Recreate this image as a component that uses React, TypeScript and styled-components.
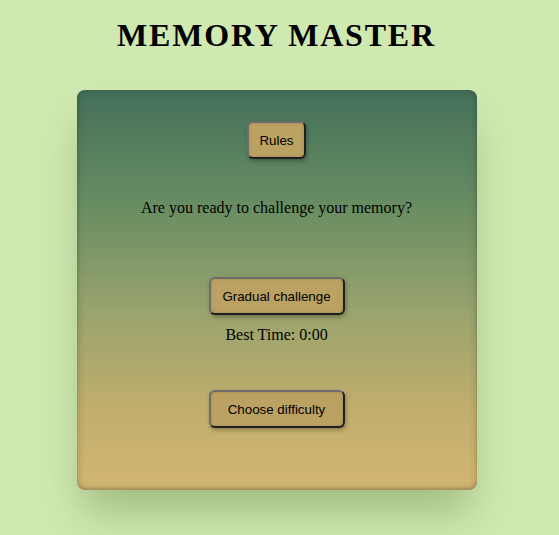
import React from "react";
import styled, { createGlobalStyle } from "styled-components";

const Global = createGlobalStyle`
  html, body {
    margin: 0;
    padding: 0;
    background: #d0e9b0;
    font-family: "Liberation Serif", "Times New Roman", serif;
    color: #000;
  }
`;

const Page = styled.div`
  box-sizing: border-box;
  min-height: 100vh;
  display: flex;
  flex-direction: column;
  align-items: center;
  padding: 17px 6px 60px 0;
`;

const Title = styled.h1`
  margin: 0;
  font-family: "Liberation Serif", "Times New Roman", serif;
  font-size: 32px;
  font-weight: bold;
  letter-spacing: 1.8px;
  line-height: 37px;
`;

const Card = styled.div`
  box-sizing: border-box;
  flex-shrink: 0;
  margin-top: 36px;
  width: 400px;
  height: 400px;
  border-radius: 8px;
  padding-top: 31px;
  display: flex;
  flex-direction: column;
  align-items: center;
  background: linear-gradient(to bottom, #44705a 0%, #6a8e62 30%, #98a36d 55%, #c1ae6c 80%, #d3b672 100%);
  box-shadow: inset 0 0 8px rgba(0, 0, 0, 0.2), inset 0 -2px 3px rgba(0, 0, 0, 0.15),
    0 28px 40px -6px rgba(50, 90, 30, 0.3);
`;

const Button = styled.button<{ $wide?: boolean }>`
  box-sizing: border-box;
  font-family: "Liberation Sans", Arial, sans-serif;
  font-size: 13.33px;
  color: #000;
  background: #bba262;
  border: 2px solid;
  border-color: #6e6e6e #1f1f1f #1f1f1f #6e6e6e;
  border-radius: 6px;
  height: 38px;
  padding: 0 10px;
  width: ${(p) => (p.$wide ? "136px" : "auto")};
  box-shadow: 1px 2px 4px rgba(0, 0, 0, 0.3), inset 0 0 3px rgba(0, 0, 0, 0.15);
  cursor: pointer;
`;

const Prompt = styled.p`
  margin: 40px 0 60px;
  font-size: 16px;
  line-height: 18px;
`;

const BestTime = styled.p`
  margin: 11px 0 46px;
  font-size: 16px;
  line-height: 18px;
`;

export default function App() {
  return (
    <>
      <Global />
      <Page>
        <Title>MEMORY MASTER</Title>
        <Card>
          <Button>Rules</Button>
          <Prompt>Are you ready to challenge your memory?</Prompt>
          <Button $wide>Gradual challenge</Button>
          <BestTime>Best Time: 0:00</BestTime>
          <Button $wide>Choose difficulty</Button>
        </Card>
      </Page>
    </>
  );
}
